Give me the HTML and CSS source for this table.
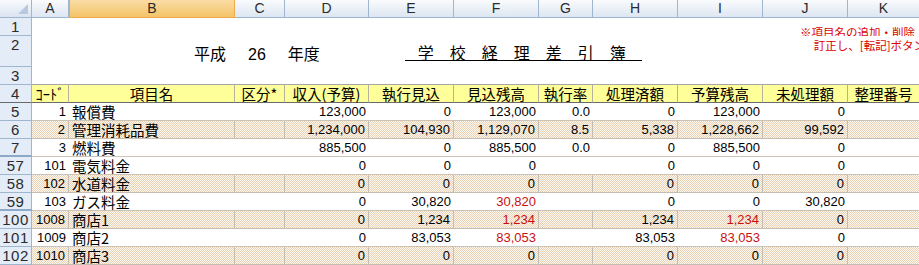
FILE: index.html
```html
<!DOCTYPE html>
<html lang="ja">
<head>
<meta charset="utf-8">
<title>学校経理差引簿</title>
<link rel="stylesheet" href="styles.css">
</head>
<body>
<div class="sheet">
  <div class="corner"><span class="tri"></span></div>
  <div class="ch">A</div>
  <div class="ch sel">B</div>
  <div class="ch">C</div>
  <div class="ch">D</div>
  <div class="ch">E</div>
  <div class="ch">F</div>
  <div class="ch">G</div>
  <div class="ch">H</div>
  <div class="ch">I</div>
  <div class="ch">J</div>
  <div class="ch">K</div>

  <div class="rh">1</div>
  <div class="span r1"><span class="note note1">※項目名の追加・削除・</span></div>

  <div class="rh">2</div>
  <div class="span r2">
    <span class="era">平成<span class="yr">26</span>年度</span>
    <span class="title">学校経理差引簿</span>
    <span class="note note2">訂正し、[転記]ボタン</span>
  </div>

  <div class="rh">3</div>
  <div class="span r3"></div>

  <div class="row hdr">
    <div class="rh freeze">4</div>
    <div class="c code">ｺｰﾄﾞ</div>
    <div class="c">項目名</div>
    <div class="c">区分*</div>
    <div class="c">収入(予算)</div>
    <div class="c">執行見込</div>
    <div class="c">見込残高</div>
    <div class="c">執行率</div>
    <div class="c">処理済額</div>
    <div class="c">予算残高</div>
    <div class="c">未処理額</div>
    <div class="c">整理番号</div>
  </div>

  <div class="row w">
    <div class="rh">5</div>
    <div class="c n">1</div><div class="c t">報償費</div><div class="c"></div>
    <div class="c n">123,000</div><div class="c n">0</div><div class="c n">123,000</div><div class="c n">0.0</div>
    <div class="c n">0</div><div class="c n">123,000</div><div class="c n">0</div><div class="c"></div>
  </div>
  <div class="row p">
    <div class="rh">6</div>
    <div class="c n">2</div><div class="c t">管理消耗品費</div><div class="c"></div>
    <div class="c n">1,234,000</div><div class="c n">104,930</div><div class="c n">1,129,070</div><div class="c n">8.5</div>
    <div class="c n">5,338</div><div class="c n">1,228,662</div><div class="c n">99,592</div><div class="c"></div>
  </div>
  <div class="row w">
    <div class="rh gap">7</div>
    <div class="c n">3</div><div class="c t">燃料費</div><div class="c"></div>
    <div class="c n">885,500</div><div class="c n">0</div><div class="c n">885,500</div><div class="c n">0.0</div>
    <div class="c n">0</div><div class="c n">885,500</div><div class="c n">0</div><div class="c"></div>
  </div>
  <div class="row w">
    <div class="rh">57</div>
    <div class="c n">101</div><div class="c t">電気料金</div><div class="c"></div>
    <div class="c n">0</div><div class="c n">0</div><div class="c n">0</div><div class="c n"></div>
    <div class="c n">0</div><div class="c n">0</div><div class="c n">0</div><div class="c"></div>
  </div>
  <div class="row p">
    <div class="rh">58</div>
    <div class="c n">102</div><div class="c t">水道料金</div><div class="c"></div>
    <div class="c n">0</div><div class="c n">0</div><div class="c n">0</div><div class="c n"></div>
    <div class="c n">0</div><div class="c n">0</div><div class="c n">0</div><div class="c"></div>
  </div>
  <div class="row w">
    <div class="rh gap">59</div>
    <div class="c n">103</div><div class="c t">ガス料金</div><div class="c"></div>
    <div class="c n">0</div><div class="c n">30,820</div><div class="c n red">30,820</div><div class="c n"></div>
    <div class="c n">0</div><div class="c n">0</div><div class="c n">30,820</div><div class="c"></div>
  </div>
  <div class="row p">
    <div class="rh">100</div>
    <div class="c n">1008</div><div class="c t">商店1</div><div class="c"></div>
    <div class="c n">0</div><div class="c n">1,234</div><div class="c n red">1,234</div><div class="c n"></div>
    <div class="c n">1,234</div><div class="c n red">1,234</div><div class="c n">0</div><div class="c"></div>
  </div>
  <div class="row w">
    <div class="rh">101</div>
    <div class="c n">1009</div><div class="c t">商店2</div><div class="c"></div>
    <div class="c n">0</div><div class="c n">83,053</div><div class="c n red">83,053</div><div class="c n"></div>
    <div class="c n">83,053</div><div class="c n red">83,053</div><div class="c n">0</div><div class="c"></div>
  </div>
  <div class="row p">
    <div class="rh">102</div>
    <div class="c n">1010</div><div class="c t">商店3</div><div class="c"></div>
    <div class="c n">0</div><div class="c n">0</div><div class="c n">0</div><div class="c n"></div>
    <div class="c n">0</div><div class="c n">0</div><div class="c n">0</div><div class="c"></div>
  </div>
</div>
</body>
</html>
```
FILE: styles.css
```css
html, body {
  margin: 0;
  padding: 0;
  background: #fff;
}
body {
  width: 919px;
  height: 265px;
  overflow: hidden;
  font-family: "Noto Sans CJK JP", sans-serif;
  color: #000;
}
.sheet {
  display: grid;
  grid-template-columns: 32px 37px 166px 50px 84px 85px 85px 54px 85px 85px 85px 72px;
  grid-template-rows: 18px 18px 31px 18px 18px repeat(9, 18px);
  width: 920px;
  overflow: hidden;
}
.sheet div {
  box-sizing: border-box;
  min-width: 0;
}
.row {
  display: contents;
}

/* column headers */
.corner {
  background: linear-gradient(#f8fafd, #dae4f1);
  border-right: 1px solid #9eb6ce;
  border-bottom: 1px solid #9eb6ce;
  display: flex;
  justify-content: flex-end;
  align-items: flex-end;
  padding: 0 3px 3px 0;
}
.tri {
  width: 0;
  height: 0;
  border-left: 10px solid transparent;
  border-bottom: 10px solid #b8c9df;
}
.ch {
  background: linear-gradient(#f9fbfd, #dde6f2);
  border-right: 1px solid #9eb6ce;
  border-bottom: 1px solid #9eb6ce;
  font: 14px/17px "Liberation Sans", sans-serif;
  color: #2b2b2b;
  text-align: center;
}
.ch.sel {
  background: linear-gradient(#fadca4, #f3c468);
  border-right-color: #f0a848;
  border-left: 1px solid #f0a848;
  border-bottom-color: #f0a848;
}

/* row headers */
.rh {
  background: #e4ecf7;
  border-right: 1px solid #9eb6ce;
  border-bottom: 1px solid #9eb6ce;
  font: 15px/17px "Liberation Sans", sans-serif;
  color: #2b2b2b;
  text-align: center;
  letter-spacing: 0.5px;
}
.rh.freeze {
  border-bottom-color: #6a6a6a;
}
.rh.gap {
  border-bottom: 2px solid #8ea8c8;
}

/* top blank area */
.span {
  grid-column: 2 / -1;
  background: #fff;
  white-space: nowrap;
}
.r3 {
  border-bottom: 1px solid #a6a6a6;
}
.note {
  color: #d80000;
  font-size: 11.5px;
  line-height: 12px;
  display: inline-block;
  flex: none;
}
.note1 {
  margin: 3px 0 0 768px;
}
.r2 {
  display: flex;
  align-items: flex-end;
}
.era {
  flex: none;
  font-size: 16px;
  line-height: 16px;
  margin: 0 0 4px 162px;
}
.yr {
  font-family: "Liberation Sans", sans-serif;
  margin: 0 22px;
}
.title {
  flex: none;
  font-size: 16px;
  line-height: 16px;
  letter-spacing: 16px;
  padding-left: 13px;
  margin: 0 0 6px 85px;
  border-bottom: 1px solid #000;
}
.note2 {
  align-self: flex-start;
  margin: 3px 0 0 172px;
}

/* cells */
.c {
  font-size: 14.5px;
  line-height: 17px;
  white-space: nowrap;
  padding: 0 2px;
}
.hdr .c {
  background: #ffff99;
  text-align: center;
  border-right: 1px solid #b5b09a;
  border-bottom: 1px solid #6a6a6a;
}
.hdr .code {
  padding: 0;
}
.n {
  text-align: right;
  font-family: "Liberation Sans", "Noto Sans CJK JP", sans-serif;
  font-size: 13px;
  padding-right: 3px;
}
.t {
  padding-left: 3px;
}
.red {
  color: #c81010;
}
.w .c {
  background: #fff;
  border-bottom: 1px solid #cbc3b8;
}
.p .c {
  background-color: #f4e7d7;
  background-image: repeating-conic-gradient(#ead2b4 0 25%, #fcf7f1 0 50%);
  background-size: 2px 2px;
  border-right: 1px solid #c6bdb2;
  border-bottom: 1px solid #c6bdb2;
}
```
